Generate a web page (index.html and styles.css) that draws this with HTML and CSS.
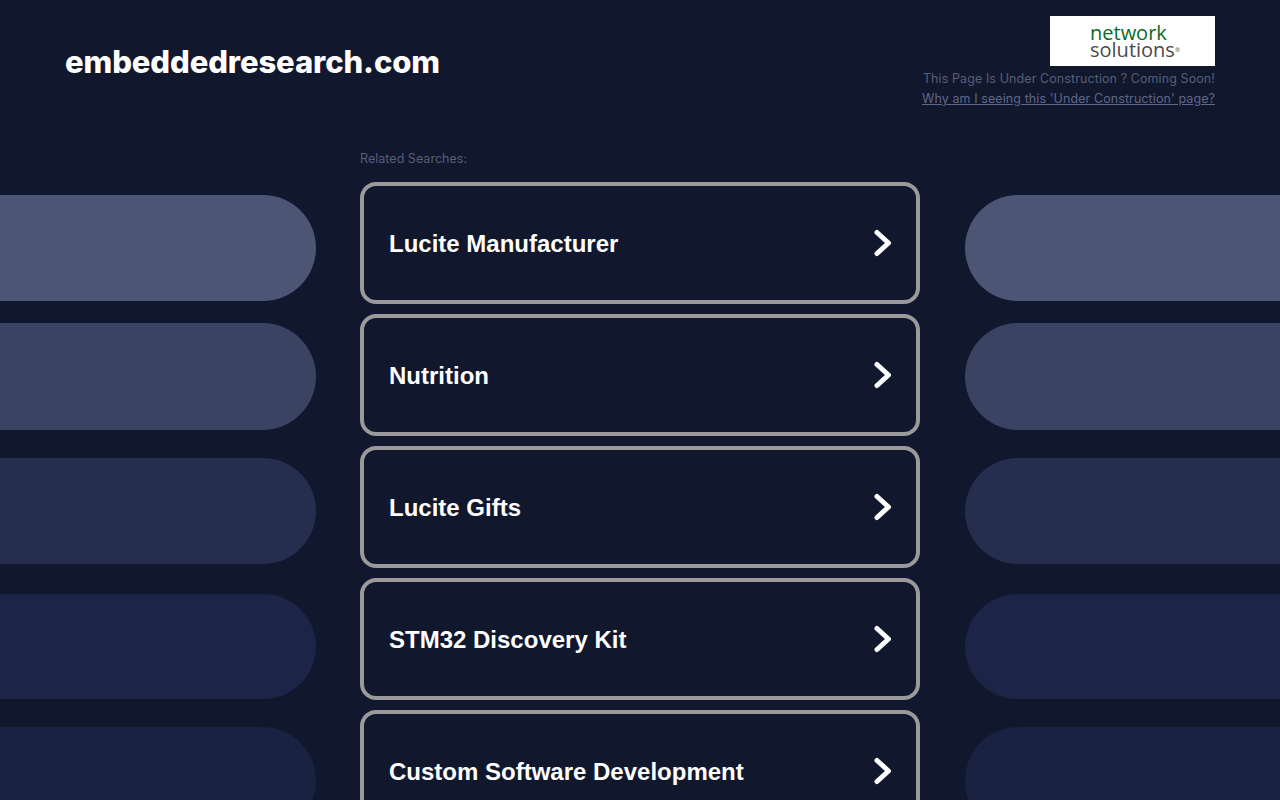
FILE: index.html
```html
<!DOCTYPE html>
<html>
    <head>
        <meta charset="utf-8">
        <title>embeddedresearch.com</title>
        <link rel="stylesheet" href="styles.css">
    </head>
    <body>
        <header class="header">
            <h1 class="domain">embeddedresearch.com</h1>
            <div class="notice">
                <div class="logo">
                    <span class="logo-top">network</span>
                    <span class="logo-bottom">solutions<span class="logo-mark">®</span></span>
                </div>
                <p class="notice-text">This Page Is Under Construction ? Coming Soon!</p>
                <a class="notice-link" href="#">Why am I seeing this 'Under Construction' page?</a>
            </div>
        </header>

        <div class="content">
            <div class="pills pills-left">
                <div class="pill pill-1"></div>
                <div class="pill pill-2"></div>
                <div class="pill pill-3"></div>
                <div class="pill pill-4"></div>
                <div class="pill pill-5"></div>
            </div>

            <main class="searches">
                <p class="searches-title">Related Searches:</p>
                <a class="search" href="#">
                    <span class="search-label">Lucite Manufacturer</span>
                    <svg class="chevron" viewBox="0 0 20 28"><polyline points="5,3.5 16.5,14 5,24.5"/></svg>
                </a>
                <a class="search" href="#">
                    <span class="search-label">Nutrition</span>
                    <svg class="chevron" viewBox="0 0 20 28"><polyline points="5,3.5 16.5,14 5,24.5"/></svg>
                </a>
                <a class="search" href="#">
                    <span class="search-label">Lucite Gifts</span>
                    <svg class="chevron" viewBox="0 0 20 28"><polyline points="5,3.5 16.5,14 5,24.5"/></svg>
                </a>
                <a class="search" href="#">
                    <span class="search-label">STM32 Discovery Kit</span>
                    <svg class="chevron" viewBox="0 0 20 28"><polyline points="5,3.5 16.5,14 5,24.5"/></svg>
                </a>
                <a class="search" href="#">
                    <span class="search-label">Custom Software Development</span>
                    <svg class="chevron" viewBox="0 0 20 28"><polyline points="5,3.5 16.5,14 5,24.5"/></svg>
                </a>
            </main>

            <div class="pills pills-right">
                <div class="pill pill-1"></div>
                <div class="pill pill-2"></div>
                <div class="pill pill-3"></div>
                <div class="pill pill-4"></div>
                <div class="pill pill-5"></div>
            </div>
        </div>
    </body>
</html>
```

FILE: styles.css
```css
html, body {
    margin: 0;
    padding: 0;
    height: 100%;
    overflow: hidden;
    background: #11172d;
}

.header {
    display: flex;
    justify-content: space-between;
    height: 148px;
    padding: 16px 65px 0;
    box-sizing: border-box;
}

.domain {
    margin: 26px 0 0;
    font: 800 31px/40px Inter, sans-serif;
    letter-spacing: -0.1px;
    color: #fff;
}

.notice {
    display: flex;
    flex-direction: column;
    align-items: flex-end;
    font: 12.5px/20px Inter, sans-serif;
    letter-spacing: 0.09px;
    color: #565e78;
}

.logo {
    display: flex;
    flex-direction: column;
    width: 165px;
    height: 50px;
    padding: 8px 0 0 40px;
    box-sizing: border-box;
    background: #fff;
    font-family: "Open Sans", sans-serif;
    font-size: 20px;
    line-height: 17px;
    letter-spacing: 0;
}

.logo-top {
    color: #0c6a22;
}

.logo-bottom {
    color: #4a4a4a;
}

.logo-mark {
    font-size: 6px;
    vertical-align: 5px;
    line-height: 0;
}

.notice-text {
    margin: 3px 0 0;
}

.notice-link {
    color: #5f6789;
}

.content {
    display: grid;
    grid-template-columns: 360px 560px 360px;
}

.searches-title {
    margin: 0 0 14px;
    padding-top: 1px;
    font: 12.5px/19px Inter, sans-serif;
    letter-spacing: 0.03px;
    color: #565e78;
}

.search {
    display: flex;
    justify-content: space-between;
    align-items: center;
    height: 122px;
    margin-bottom: 10px;
    padding: 0 24px 0 25px;
    box-sizing: border-box;
    border: 4px solid #9a9a9c;
    border-radius: 16px;
    font: bold 24px "Liberation Sans", Arial, sans-serif;
    color: #fff;
    text-decoration: none;
}

.search-label {
    padding-top: 2px;
}

.chevron {
    width: 20px;
    height: 28px;
}

.chevron polyline {
    fill: none;
    stroke: #fff;
    stroke-width: 5;
    stroke-linecap: round;
    stroke-linejoin: round;
}

.pills {
    padding-top: 47px;
}

.pills-left {
    padding-right: 44px;
}

.pills-right {
    padding-left: 45px;
}

.pill {
    height: 107px;
    margin-bottom: 21px;
}

.pills-left .pill {
    border-radius: 0 54px 54px 0;
}

.pills-right .pill {
    border-radius: 54px 0 0 54px;
}

.pill-1 {
    height: 106px;
    margin-bottom: 22px;
    background: #4c5674;
}

.pill-2 {
    margin-bottom: 28px;
    background: #3b4362;
}

.pill-3 {
    height: 106px;
    margin-bottom: 30px;
    background: #262e4f;
}

.pill-4 {
    height: 105px;
    margin-bottom: 28px;
    background: #1c2547;
}

.pill-5 {
    background: #192240;
}
```
